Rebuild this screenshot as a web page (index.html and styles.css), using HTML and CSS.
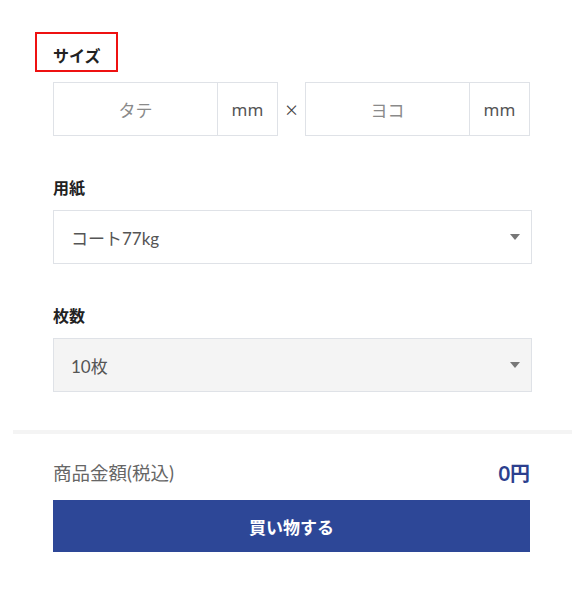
FILE: index.html
```html
<!DOCTYPE html>
<html lang="ja">
<head>
<meta charset="utf-8">
<title>注文フォーム</title>
<link rel="stylesheet" href="styles.css">
</head>
<body>
<div class="page">
  <div class="form">
    <div class="field field-size">
      <div class="label label-marked">サイズ</div>
      <div class="size-row">
        <div class="size-group">
          <div class="size-input">タテ</div>
          <div class="size-unit">mm</div>
        </div>
        <div class="size-times">×</div>
        <div class="size-group">
          <div class="size-input">ヨコ</div>
          <div class="size-unit">mm</div>
        </div>
      </div>
    </div>
    <div class="field">
      <div class="label">用紙</div>
      <div class="select">
        <span class="select-text">コート77kg</span>
        <span class="select-arrow"></span>
      </div>
    </div>
    <div class="field">
      <div class="label">枚数</div>
      <div class="select select-filled">
        <span class="select-text">10枚</span>
        <span class="select-arrow"></span>
      </div>
    </div>
  </div>
  <div class="divider"></div>
  <div class="summary">
    <div class="price-row">
      <span class="price-label">商品金額(税込)</span>
      <span class="price-value">0円</span>
    </div>
    <button class="buy-button" type="button">買い物する</button>
  </div>
</div>
</body>
</html>
```

FILE: styles.css
```css
html, body {
  margin: 0;
  padding: 0;
  background: #ffffff;
}

body {
  font-family: Lato, "Noto Sans CJK JP", sans-serif;
  color: #222222;
}

.page {
  width: 585px;
  padding-top: 32px;
}

.form {
  padding: 0 53px;
}

.field {
  margin-top: 40px;
}

.field-size {
  margin-top: 0;
}

.label {
  font-size: 16px;
  font-weight: 700;
  line-height: 24px;
  color: #222222;
  margin-bottom: 10px;
}

.label-marked {
  display: inline-block;
  margin-left: -18px;
  padding: 10px 15px 2px 16px;
  border: 2px solid #ee1111;
  line-height: 24px;
  height: 24px;
}

.size-row {
  display: flex;
  align-items: stretch;
  height: 54px;
  width: 477px;
}

.size-group {
  flex: 1;
  display: flex;
  border: 1px solid #dfe2e7;
  box-sizing: border-box;
}

.size-input {
  flex: 1;
  display: flex;
  align-items: center;
  justify-content: center;
  font-size: 17px;
  color: #8a8a8a;
}

.size-unit {
  width: 59px;
  border-left: 1px solid #dfe2e7;
  display: flex;
  align-items: center;
  justify-content: center;
  font-family: "Noto Sans", sans-serif;
  font-size: 17px;
  color: #555555;
}

.size-times {
  width: 27px;
  display: flex;
  align-items: center;
  justify-content: center;
  font-family: "Noto Sans", sans-serif;
  font-size: 22px;
  font-weight: 300;
  color: #444444;
}

.select {
  height: 54px;
  box-sizing: border-box;
  border: 1px solid #dfe2e7;
  display: flex;
  align-items: center;
  justify-content: space-between;
  padding: 0 11px 0 17px;
  background: #ffffff;
}

.select-filled {
  background: #f4f4f4;
}

.select-text {
  font-size: 17px;
  color: #555555;
}

.select-arrow {
  width: 0;
  height: 0;
  border-left: 5px solid transparent;
  border-right: 5px solid transparent;
  border-top: 6px solid #777777;
}

.divider {
  margin: 38px 13px 0;
  height: 4px;
  background: #f4f4f4;
}

.summary {
  padding: 0 55px 0 53px;
}

.price-row {
  display: flex;
  justify-content: space-between;
  align-items: center;
  margin-top: 24px;
  height: 28px;
}

.price-label {
  font-size: 18.5px;
  color: #666666;
}

.price-value {
  font-size: 20px;
  font-weight: 700;
  color: #2c3f8e;
}

.buy-button {
  display: block;
  width: 100%;
  height: 52px;
  margin-top: 14px;
  border: none;
  background: #2d4797;
  color: #ffffff;
  font-family: Lato, "Noto Sans CJK JP", sans-serif;
  font-size: 17px;
  font-weight: 700;
  cursor: pointer;
}
```
